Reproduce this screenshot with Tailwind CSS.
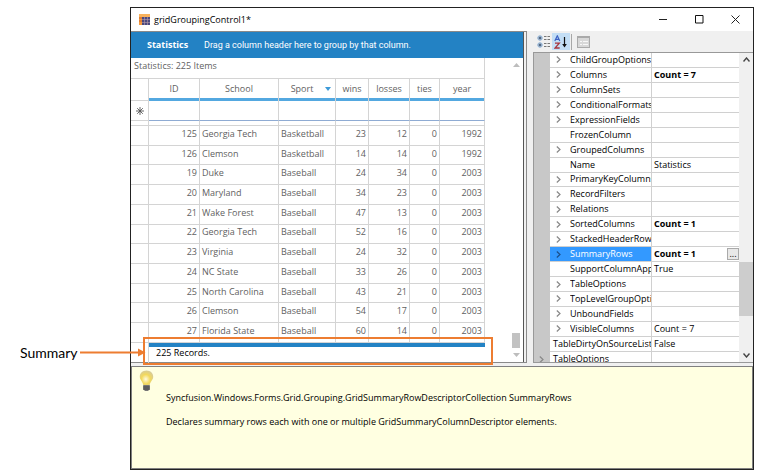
<!DOCTYPE html>
<html lang="en">
<head>
<meta charset="utf-8">
<title>gridGroupingControl1*</title>
<script src="https://cdn.jsdelivr.net/npm/@tailwindcss/browser@4"></script>
</head>
<body class="bg-white font-['Open_Sans',sans-serif] text-[9px] leading-3 text-black">
<main class="relative flex min-h-screen pt-[7px] pr-[3px] pb-[3px]">
  <aside class="flex w-[130px] shrink-0 items-end pb-[109px] pl-5">
    <span class="font-['Lato',sans-serif] text-[14px] leading-4">Summary</span>
  </aside>

  <section class="flex min-w-0 flex-1 flex-col border border-[#222]">
    <header class="flex h-[23px] shrink-0 items-center pl-2">
      <svg class="size-[11px]" viewBox="0 0 11 11"><rect width="11" height="11" fill="#f59a3c"/><rect x="0" y="0" width="11" height="3" fill="#f9b25c"/><rect x="3" y="3" width="8" height="8" fill="#4a4a80"/><path d="M3 5.500h8M3 8.500h8M5.500 3v8M8.500 3v8" stroke="#b99aa8" stroke-width=".6"/><path d="M0 4h3M0 7h3" stroke="#c9602c"/></svg>
      <h1 class="ml-1 flex-1">gridGroupingControl1*</h1>
      <button aria-label="Minimize" class="grid h-full w-9 place-items-center"><svg class="size-[9px]" viewBox="0 0 9 9"><path d="M0 4.500h8" stroke="#222"/></svg></button>
      <button aria-label="Maximize" class="grid h-full w-9 place-items-center"><svg class="size-[9px]" viewBox="0 0 9 9"><path d="M.5 .5h7.500v7.500h-7.500z" fill="none" stroke="#111"/></svg></button>
      <button aria-label="Close" class="grid h-full w-9 place-items-center"><svg class="size-[9px]" viewBox="0 0 9 9"><path d="M.5 .5l8 8M8.500 .5l-8 8" stroke="#222"/></svg></button>
    </header>

    <div class="flex h-[332px] shrink-0 bg-[#f0f0f0]">
      <div class="flex min-w-0 flex-1 border-t border-r border-b border-[#8a8a8a] pr-[2px]">
        <div class="flex min-w-0 flex-1 flex-col border-r border-[#555] bg-white">
          <div class="flex h-[26px] shrink-0 items-center bg-[#2382c4] pl-4 text-white">
            <b class="w-[57px]">Statistics</b>
            <span class="font-['Roboto',sans-serif]">Drag a column header here to group by that column.</span>
          </div>
          <div class="flex min-h-0 flex-1">
            <div class="w-[354px] shrink-0 text-[#5f5f5f]">
              <table class="w-full table-fixed border-separate border-spacing-0">
                <caption class="h-5 border-r border-[#d4d4d4] pt-[2px] pl-[3px] text-left leading-3">Statistics: 225 Items</caption>
                <colgroup><col class="w-[18px]"><col class="w-[51px]"><col class="w-[79px]"><col class="w-[57px]"><col class="w-[33px]"><col class="w-[41px]"><col class="w-[30px]"><col></colgroup>
                <thead id="head"></thead>
              </table>
              <table class="h-[217px] w-full table-fixed border-separate border-spacing-0">
                <colgroup><col class="w-[18px]"><col class="w-[51px]"><col class="w-[79px]"><col class="w-[57px]"><col class="w-[33px]"><col class="w-[41px]"><col class="w-[30px]"><col></colgroup>
                <tbody id="rows"></tbody>
              </table>
              <div class="flex h-5">
                <div class="w-[18px] border-r border-[#d4d4d4]"></div>
                <div class="flex-1 border-t-4 border-[#2382c4] pl-[7px] text-black">225 Records.</div>
              </div>
            </div>
            <div class="flex flex-1 flex-col items-end justify-between pt-[5px] pr-[3px] pb-[5px]">
              <svg class="h-[4px] w-[7px]" viewBox="0 0 7 4"><path d="M0 4L3.500 0L7 4z" fill="#bdbdbd"/></svg>
              <div class="flex flex-col items-center gap-[5px]">
                <div class="h-[15px] w-[8px] bg-[#c2c2c2]"></div>
                <svg class="h-[4px] w-[7px]" viewBox="0 0 7 4"><path d="M0 0L3.500 4L7 0z" fill="#bdbdbd"/></svg>
              </div>
            </div>
          </div>
        </div>
      </div>

      <div class="flex w-[226px] shrink-0 flex-col pl-[6px]">
        <div class="flex h-[21px] shrink-0 items-center pl-[2px]">
          <button aria-label="Categorized" class="grid h-[17px] w-[17px] place-items-center"><svg class="h-[13px] w-[14px]" viewBox="0 0 14 13"><circle cx="3" cy="3" r="2.200" fill="#fff" stroke="#7fa6cf"/><path d="M1.500 3h3M3 1.500v3" stroke="#16365c"/><circle cx="3" cy="10" r="2.200" fill="#fff" stroke="#7fa6cf"/><path d="M1.500 10h3M3 8.500v3" stroke="#16365c"/><path d="M7 1.500h2.500M10.500 1.500h2.500M7 4.500h2.500M10.500 4.500h2.500M7 8.500h2.500M10.500 8.500h2.500M7 11.500h2.500M10.500 11.500h2.500" stroke="#777"/></svg></button>
          <button aria-label="Alphabetical" class="grid h-[17px] w-[18px] place-items-center bg-[#c3def5]"><svg class="h-[14px] w-[14px]" viewBox="0 0 14 14"><path d="M.8 6L3.300 .8L5.800 6M1.700 4.400h3.200" fill="none" stroke="#3c62c4" stroke-width="1.200"/><path d="M1 8.200h4.300L1 13h4.700" fill="none" stroke="#a8343c" stroke-width="1.300"/><path d="M10.500 2v8" stroke="#111" stroke-width="1.200"/><path d="M8.200 9h4.600l-2.300 3.500z" fill="#111"/></svg></button>
          <div class="mx-px h-4 w-px bg-[#a8a8a8]"></div>
          <button aria-label="Property pages" disabled class="ml-[3px] grid h-[17px] w-[14px] place-items-center"><svg class="h-[12px] w-[13px]" viewBox="0 0 13 12"><rect x=".5" y=".5" width="12" height="11" fill="#d8d8d8" stroke="#aaa"/><path d="M.5 1.500h12" stroke="#aaa"/><path d="M3 5.500h2M6 5.500h5M3 8.500h2M6 8.500h5" stroke="#f8f8f8"/></svg></button>
        </div>
        <div class="flex h-[311px] overflow-hidden border-t border-b border-l border-[#999] bg-white">
          <div class="min-w-0 flex-1">
            <table class="h-[314px] w-full table-fixed border-separate border-spacing-0">
              <colgroup><col class="w-[16px]"><col class="w-[102px]"><col></colgroup>
              <tbody id="props"></tbody>
            </table>
          </div>
          <div class="flex w-[14px] shrink-0 flex-col items-center bg-[#f0f0f0] py-1">
            <svg class="h-[5px] w-[7px] shrink-0" viewBox="0 0 7 5"><path d="M.5 4.500L3.500 1L6.500 4.500" fill="none" stroke="#444" stroke-width="1.400"/></svg>
            <div class="mt-[200px] h-[54px] w-full shrink-0 bg-[#cdcdcd]"></div>
            <svg class="mt-auto h-[5px] w-[7px] shrink-0" viewBox="0 0 7 5"><path d="M.5 .5L3.500 4L6.500 .5" fill="none" stroke="#444" stroke-width="1.400"/></svg>
          </div>
        </div>
      </div>
    </div>
    <div class="h-[3px] shrink-0 bg-[#f0f0f0]"></div>

    <footer class="flex flex-1 border border-[#808080] bg-[#ffffe1] pl-[7px]">
      <svg class="mt-[3px] h-[22px] w-[15px]" viewBox="0 0 15 22"><defs><radialGradient id="bulb" cx=".45" cy=".6" r=".65"><stop offset="0" stop-color="#fffbe0"/><stop offset=".5" stop-color="#f3d95c"/><stop offset="1" stop-color="#d3c9a0"/></radialGradient></defs><path d="M7.500 .5C3.500 .5 .8 3.300 .8 6.800C.8 10 3.800 11.500 4.200 15h6.600C11.200 11.500 14.200 10 14.200 6.800C14.200 3.300 11.500 .5 7.500 .5z" fill="url(#bulb)"/><path d="M4.200 15h6.600v4.500l-2 1.500h-2.600l-2-1.500z" fill="#777"/><path d="M4.200 17h6.600M4.200 19h6.600" stroke="#444"/></svg>
      <div class="flex flex-col gap-3 pt-[25px] pl-3">
        <p>Syncfusion.Windows.Forms.Grid.Grouping.GridSummaryRowDescriptorCollection SummaryRows</p>
        <p>Declares summary rows each with one or multiple GridSummaryColumnDescriptor elements.</p>
      </div>
    </footer>
  </section>

  <div class="absolute top-[337px] left-[143px] h-[28px] w-[350px] border-2 border-[#ed7d31]"></div>
  <svg class="absolute top-[348px] left-[80px] h-[9px] w-[66px]" viewBox="0 0 66 9"><path d="M0 4.500h60" stroke="#ed7d31" stroke-width="2"/><path d="M58 .5L65.500 4.500L58 8.500z" fill="#ed7d31"/></svg>
</main>

<script>
document.getElementById('head').innerHTML =
  '<tr class="h-[23px]"><td class="border-t border-r border-b border-[#d4d4d4]"></td>' +
  ['ID', 'School', 'Sport', 'wins', 'losses', 'ties', 'year'].map(name =>
    `<th scope="col" class="border-t border-r border-[#d4d4d4] p-0 font-normal"><div class="flex h-[19px] items-center justify-center ${name === 'Sport' ? 'pl-2' : ''}">${name}${name === 'Sport' ? '<svg class="ml-3 h-[4px] w-[6px]" viewBox="0 0 6 4"><path d="M0 0h6L3 4z" fill="#3d9ad8"/></svg>' : ''}</div><div class="h-[3px] bg-[#53a8e0]"></div></th>`).join('') +
  '</tr><tr class="h-5"><td class="border-r border-b border-[#d4d4d4] p-0"><svg class="mx-auto size-[8px]" viewBox="0 0 8 8"><path d="M4 0v8M0 4h8M1.200 1.200l5.600 5.600M6.800 1.200L1.200 6.800" stroke="#555" stroke-width=".9"/></svg></td>' +
  '<td class="border-r border-b border-r-[#d4d4d4] border-b-[#8fabd3]"></td>'.repeat(7) +
  '</tr><tr class="h-[5px]">' + '<td class="border-r border-b border-[#d4d4d4] p-0"></td>'.repeat(8) + '</tr>';

const records = [
  [125, 'Georgia Tech', 'Basketball', 23, 12, 0, 1992],
  [126, 'Clemson', 'Basketball', 14, 14, 0, 1992],
  [19, 'Duke', 'Baseball', 24, 34, 0, 2003],
  [20, 'Maryland', 'Baseball', 34, 23, 0, 2003],
  [21, 'Wake Forest', 'Baseball', 47, 13, 0, 2003],
  [22, 'Georgia Tech', 'Baseball', 52, 16, 0, 2003],
  [23, 'Virginia', 'Baseball', 24, 32, 0, 2003],
  [24, 'NC State', 'Baseball', 33, 26, 0, 2003],
  [25, 'North Carolina', 'Baseball', 43, 21, 0, 2003],
  [26, 'Clemson', 'Baseball', 54, 17, 0, 2003],
  [27, 'Florida State', 'Baseball', 60, 14, 0, 2003]
];
document.getElementById('rows').innerHTML = records.map(r =>
  '<tr><td class="border-r border-b border-[#d4d4d4] p-0"></td>' + r.map(v =>
    typeof v === 'number'
      ? `<td class="border-r border-b border-[#d4d4d4] p-0 pr-[2px] pb-[3px] text-right">${v}</td>`
      : `<td class="border-r border-b border-[#d4d4d4] p-0 pb-[3px] pl-[2px]">${v}</td>`).join('') + '</tr>').join('');

const props = [
  ['ChildGroupOptions', '', 1], ['Columns', '<b>Count = 7</b>', 1], ['ColumnSets', '', 1],
  ['ConditionalFormats', '', 1], ['ExpressionFields', '', 1], ['FrozenColumn', '', 0],
  ['GroupedColumns', '', 1], ['Name', 'Statistics', 0], ['PrimaryKeyColumns', '', 1],
  ['RecordFilters', '', 1], ['Relations', '', 1], ['SortedColumns', '<b>Count = 1</b>', 1],
  ['StackedHeaderRows', '', 1], ['SummaryRows', '<b>Count = 1</b>', 1],
  ['SupportColumnAppearance', 'True', 0], ['TableOptions', '', 1], ['TopLevelGroupOptions', '', 1],
  ['UnboundFields', '', 1], ['VisibleColumns', 'Count = 7', 1],
  ['TableDirtyOnSourceListReset', 'False', 2], ['TableOptions', '', 3]
];
const chevron = '<svg class="h-[7px] w-[5px]" viewBox="0 0 5 7"><path d="M.8 .5L4 3.500L.8 6.500" fill="none" stroke="currentColor" stroke-width="1.200"/></svg>';
document.getElementById('props').innerHTML = props.map(([name, value, kind]) => {
  const active = name === 'SummaryRows';
  const inner = kind < 2
    ? `<div class="flex items-center">${kind ? `<button aria-label="Expand ${name}" class="grid w-5 shrink-0 place-items-start pl-[6px] ${active ? 'text-[#1b4f8a]' : 'text-[#888]'}">${chevron}</button>` : '<span class="w-5 shrink-0"></span>'}<span class="min-w-0 flex-1 overflow-hidden">${name}</span></div>`
    : `<div class="overflow-hidden pl-[3px]">${name}</div>`;
  return `<tr><td class="bg-[#c8c8c8] p-0 pl-[5px] text-[#888]">${kind === 3 ? chevron : ''}</td>` +
    `<td class="overflow-hidden border-r border-b border-[#d0d0d0] p-0 whitespace-nowrap ${active ? 'bg-[#3399ff] text-white' : ''}">${inner}</td>` +
    `<td class="border-b border-[#d0d0d0] p-0 pl-[2px] whitespace-nowrap"><div class="flex items-center justify-between">${value ? `<span>${value}</span>` : ''}${active ? '<button aria-label="Edit SummaryRows" class="h-3 w-3 border border-[#aaa] bg-[#e8e8e8] leading-[6px]">...</button>' : ''}</div></td></tr>`;
}).join('');
</script>
</body>
</html>
